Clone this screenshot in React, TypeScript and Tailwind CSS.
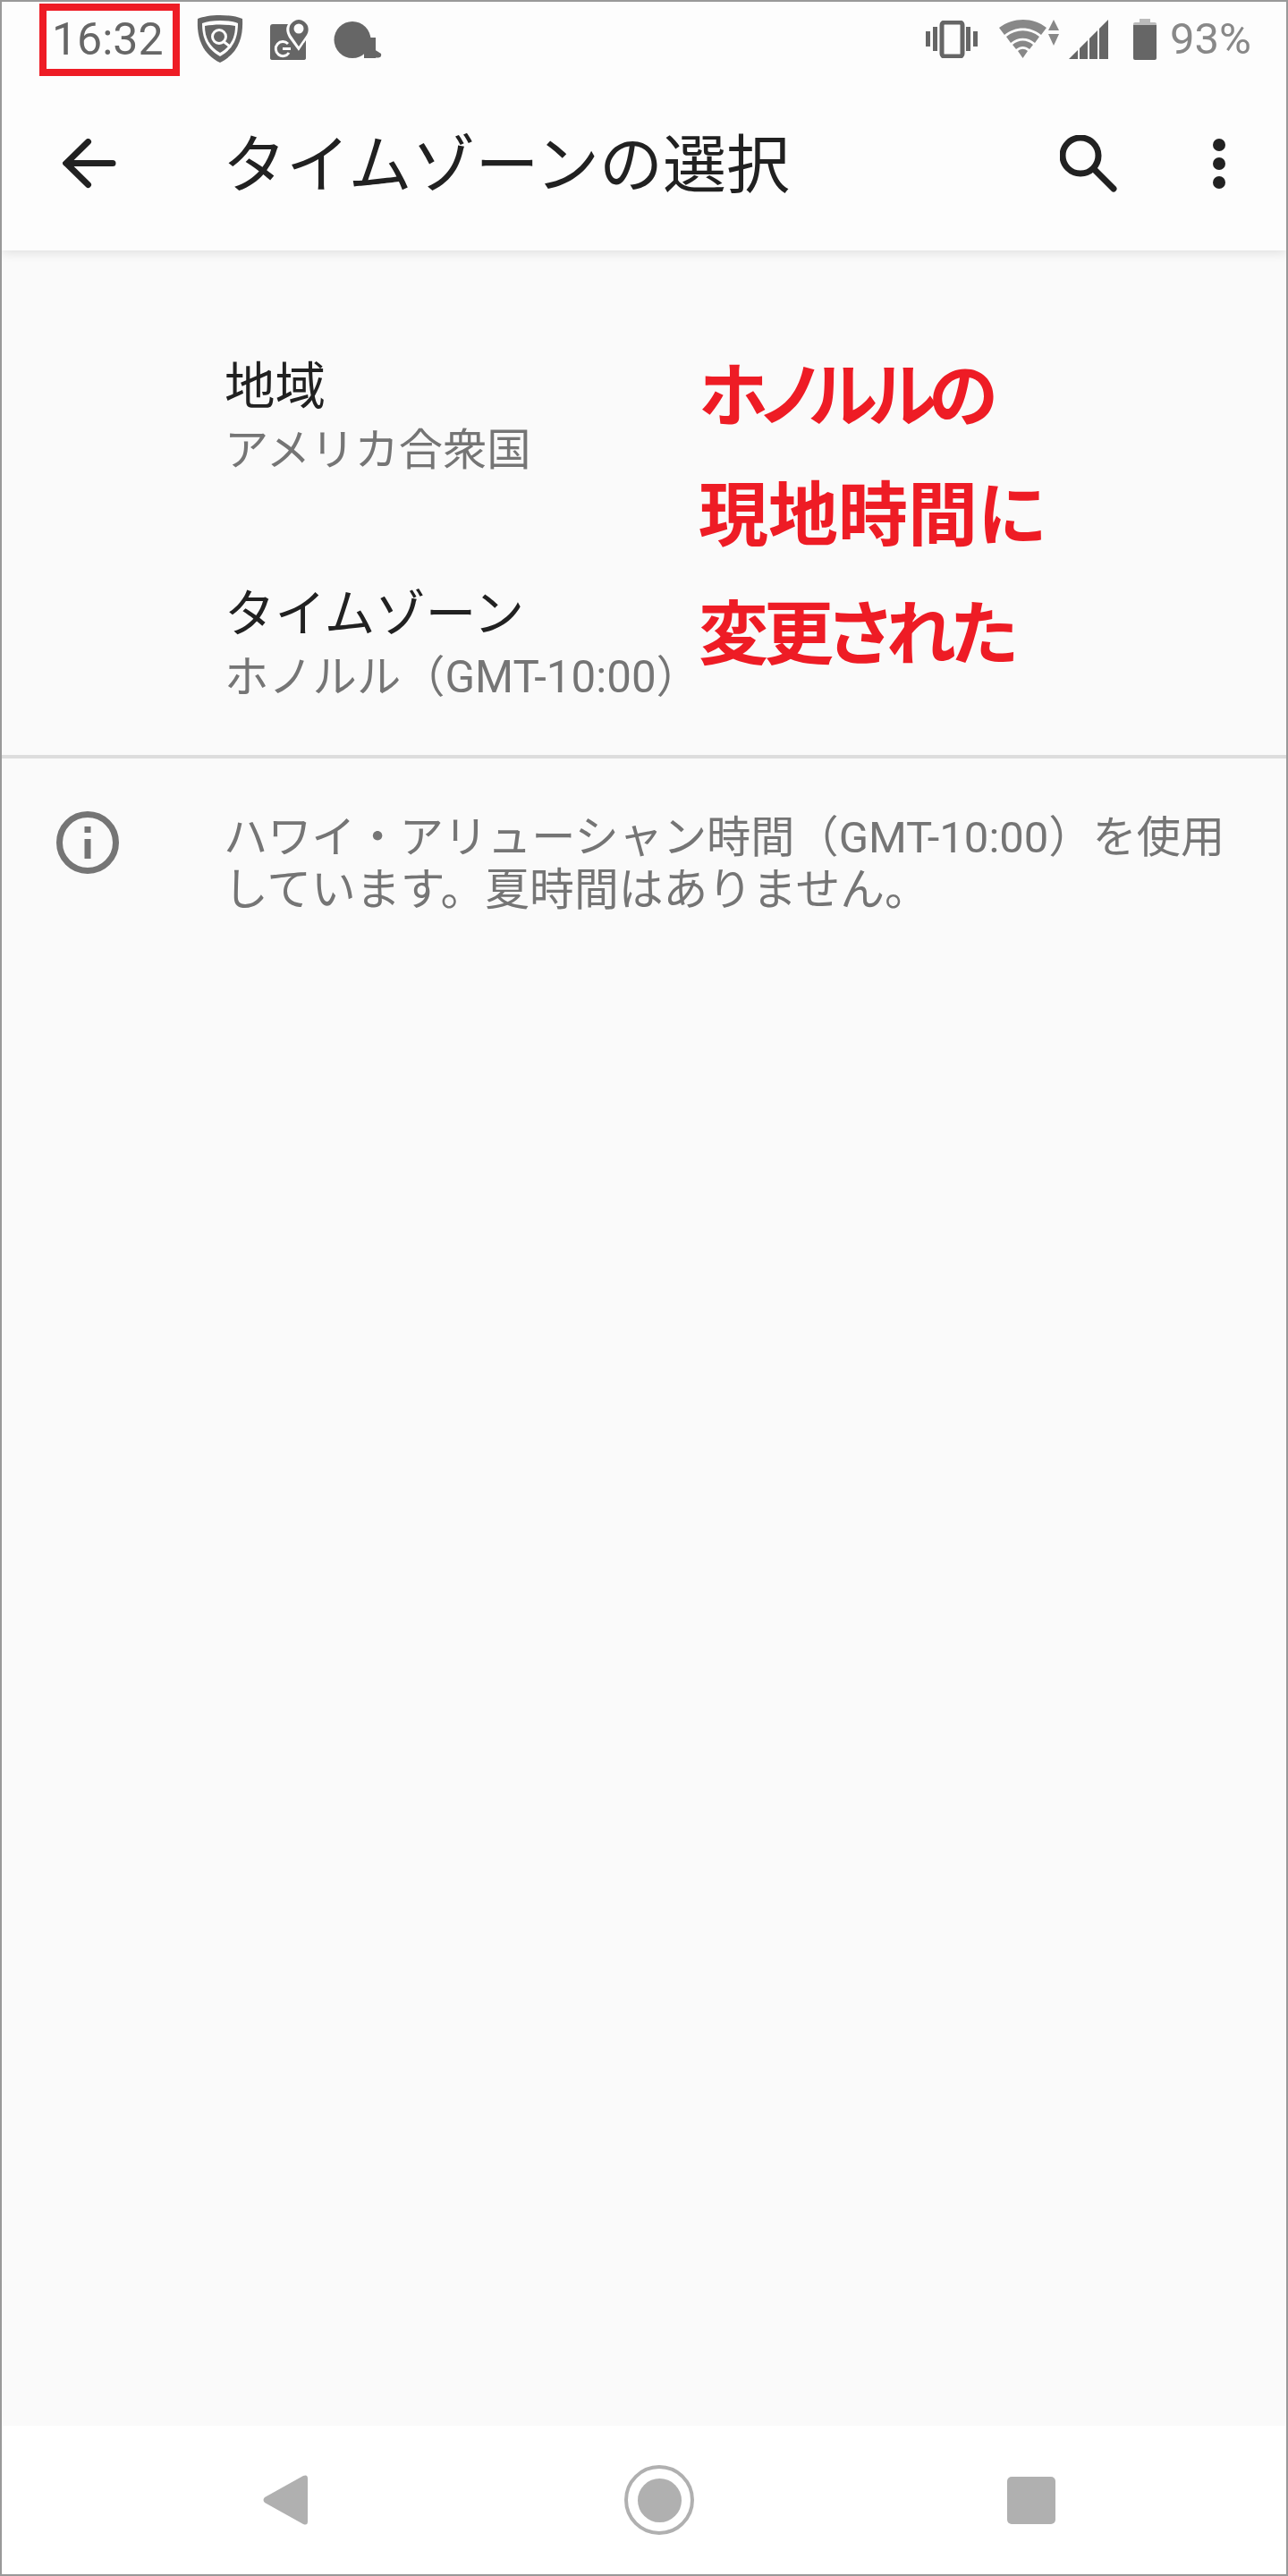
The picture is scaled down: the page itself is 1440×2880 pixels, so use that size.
import React from "react";

function ShieldIcon() {
  return (
    <svg width="52" height="54" viewBox="0 0 52 54" className="block">
      <path d="M26 0C16 0 7 1.500 1 4C0 22 4 42 26 53C48 42 52 22 51 4C45 1.500 36 0 26 0Z" fill="#666" />
      <path d="M26 6C18 6 11 7 6 9C6 24 10 37 26 46C42 37 46 24 46 9C41 7 34 6 26 6Z" fill="#fdfdfd" />
      <path d="M9 12C20 10 32 10 43 12C43 25 38 35 26 42C14 35 9 25 9 12Z" fill="#666" />
      <circle cx="25" cy="24" r="7.500" fill="none" stroke="#fdfdfd" strokeWidth="3" />
      <path d="M30 29.500L37 35" stroke="#fdfdfd" strokeWidth="3" strokeLinecap="round" />
    </svg>
  );
}

function MapsIcon() {
  return (
    <svg width="44" height="47" viewBox="0 0 44 47" className="block">
      <path d="M3 6H26L40 30V44Q40 46 37 46H3Q0 46 0 44V9Q0 6 3 6Z" fill="#666" />
      <path d="M32 36L21 21C18 15 17 11 20 6C23 1 27 0 32 0C37 0 41 1 43 6C45 11 44 15 42 21Z" fill="#fdfdfd" />
      <path d="M40 24V38L32 36Z" fill="#666" />
      <path d="M32 31L23 18C21 15 21 11 22 8C24 4 28 1 32 1C36 1 40 4 42 8C43 11 43 15 41 18Z" fill="#666" />
      <circle cx="32" cy="11" r="5.500" fill="#fdfdfd" />
      <path d="M20 28A8 8 0 1 0 21 38" fill="none" stroke="#fdfdfd" strokeWidth="3" />
      <path d="M14 33.500H23" stroke="#fdfdfd" strokeWidth="3" />
    </svg>
  );
}

function BlobIcon() {
  return (
    <svg width="54" height="41" viewBox="0 0 54 41" className="block">
      <circle cx="21" cy="20.500" r="20.500" fill="#666" />
      <rect x="34" y="18" width="13" height="23" fill="#666" />
      <path d="M42 29L53 36Q54 40 50 40.500H34Z" fill="#666" />
    </svg>
  );
}

function VibrateIcon() {
  return (
    <svg width="58" height="42" viewBox="0 0 58 42" className="block">
      <rect x="18" y="2" width="23" height="38" rx="3" fill="none" stroke="#666" strokeWidth="5" />
      <rect x="0" y="12" width="5" height="17" fill="#666" />
      <rect x="8" y="7" width="5" height="27" fill="#666" />
      <rect x="45" y="7" width="5" height="27" fill="#666" />
      <rect x="53" y="12" width="5" height="17" fill="#666" />
    </svg>
  );
}

function WifiIcon() {
  return (
    <svg width="68" height="44" viewBox="0 0 68 44" className="block">
      <path d="M0 9C16 -3 38 -3 53 9L47 17C35 7 18 7 6 17Z" fill="#888" />
      <path d="M8 19C19 10 34 10 45 19L40 26C32 19 21 19 13 26Z" fill="#888" />
      <path d="M15 28C22 22 31 22 38 28L34 33C29 29 24 29 19 33Z" fill="#888" />
      <path d="M21 35C25 32 28 32 32 35L26.500 43Z" fill="#888" />
      <path d="M61 0L67 12H55Z" fill="#888" />
      <path d="M55 16H67L61 29Z" fill="#888" />
    </svg>
  );
}

function SignalIcon() {
  return (
    <svg width="44" height="44" viewBox="0 0 44 44" className="block">
      <path d="M0 44L10 34V44Z" fill="#666" />
      <path d="M12 32L21 23V44H12Z" fill="#666" />
      <path d="M23 21L32 12V44H23Z" fill="#666" />
      <path d="M34 10L44 0V44H34Z" fill="#666" />
    </svg>
  );
}

function BatteryIcon() {
  return (
    <svg width="26" height="46" viewBox="0 0 26 46" className="block">
      <path d="M7 0H19V4H7Z" fill="#bbb" />
      <path d="M2 4H24Q26 4 26 6V8H0V6Q0 4 2 4Z" fill="#bbb" />
      <path d="M0 7H26V44Q26 46 24 46H2Q0 46 0 44Z" fill="#666" />
    </svg>
  );
}

function BackIcon() {
  return (
    <svg width="60" height="56" viewBox="0 0 60 56" className="block">
      <path d="M28.500 3.500L4 27.500L28.500 51.500M4 27.500H56" fill="none" stroke="#212121" strokeWidth="7" strokeLinecap="round" strokeLinejoin="miter" />
    </svg>
  );
}

function SearchIcon() {
  return (
    <svg width="64" height="64" viewBox="0 0 64 64" className="block">
      <circle cx="23" cy="23" r="20" fill="none" stroke="#212121" strokeWidth="7" />
      <path d="M40 40L60 60" stroke="#212121" strokeWidth="7" strokeLinecap="round" />
    </svg>
  );
}

function MoreIcon() {
  return (
    <svg width="14" height="56" viewBox="0 0 14 56" className="block">
      <circle cx="7" cy="7" r="7" fill="#212121" />
      <circle cx="7" cy="28" r="7" fill="#212121" />
      <circle cx="7" cy="49" r="7" fill="#212121" />
    </svg>
  );
}

function InfoIcon() {
  return (
    <svg width="70" height="70" viewBox="0 0 70 70" className="block shrink-0">
      <circle cx="35" cy="35" r="31.500" fill="none" stroke="#757575" strokeWidth="7" />
      <rect x="31.500" y="31" width="7" height="22" fill="#757575" />
      <rect x="31.500" y="17" width="7" height="7" fill="#757575" />
    </svg>
  );
}

function NavBack() {
  return (
    <svg width="50" height="58" viewBox="0 0 50 58" className="block">
      <path d="M45 2L2 26Q-1 29 2 32L45 56Q50 58 50 53V5Q50 0 45 2Z" fill="#b0b0b0" />
    </svg>
  );
}

function NavHome() {
  return (
    <div className="flex h-[78px] w-[78px] items-center justify-center rounded-full border-4 border-[#b0b0b0]">
      <div className="h-[49px] w-[49px] rounded-full bg-[#b0b0b0]" />
    </div>
  );
}

function Row({ title, value }: { title: string; value: string }) {
  return (
    <div className="flex flex-col">
      <div className="text-[56.5px] leading-[70px] text-[#212121]">{title}</div>
      <div className="text-[49.3px] leading-[70px] text-[#757575] whitespace-nowrap">{value}</div>
    </div>
  );
}

export default function App() {
  return (
    <div className="relative flex h-[2880px] w-[1440px] flex-col overflow-hidden border-2 border-[#999999] bg-[#fafafa] font-['Roboto','Noto_Sans_CJK_JP',sans-serif]">
      <header className="z-10 flex h-[278px] flex-col bg-[#fdfdfd] shadow-[0_2px_12px_rgba(0,0,0,0.12)]">
        <div className="flex h-[84px] items-center justify-between pl-[56px] pr-[39px]">
          <div className="flex items-center">
            <span className="w-[124px] text-[50px] font-normal leading-[60px] text-[#666666]">16:32</span>
            <div className="ml-[38px] flex items-center">
              <ShieldIcon />
              <div className="ml-[30px]"><MapsIcon /></div>
              <div className="ml-[27px]"><BlobIcon /></div>
            </div>
          </div>
          <div className="flex items-center">
            <VibrateIcon />
            <div className="ml-[24px]"><WifiIcon /></div>
            <div className="ml-[10px]"><SignalIcon /></div>
            <div className="ml-[28px]"><BatteryIcon /></div>
            <span className="ml-[15px] text-[49px] leading-[60px] text-[#888888]">93%</span>
          </div>
        </div>
        <div className="flex flex-1 items-center">
          <div className="ml-[68px]"><BackIcon /></div>
          <h1 className="ml-[119px] mt-[3px] text-[71px] font-normal leading-[80px] text-[#212121] whitespace-nowrap">タイムゾーンの選択</h1>
          <div className="ml-auto flex items-center gap-[107px] pr-[68px]">
            <SearchIcon />
            <MoreIcon />
          </div>
        </div>
      </header>

      <main className="flex flex-1 flex-col">
        <section className="relative h-[568px] border-b-4 border-[#dddddd] pl-[249px] pt-[118px]">
          <div className="flex flex-col gap-[114px]">
            <Row title="地域" value="アメリカ合衆国" />
            <Row title="タイムゾーン" value="ホノルル（GMT-10:00）" />
          </div>
          <div className="absolute left-[779px] top-[98px] text-[78px] font-bold leading-[133px] text-[#ee1c25] whitespace-nowrap">
            <div className="tracking-[-9px] [font-feature-settings:'palt']">ホノルルの</div>
            <div>現地時間に</div>
            <div className="tracking-[-5px] [font-feature-settings:'palt']">変更された</div>
          </div>
        </section>
        <section className="flex pl-[61px] pr-[60px] pt-[59px]">
          <InfoIcon />
          <p className="ml-[117px] text-[49.2px] leading-[58px] text-[#757575] whitespace-nowrap">
            <span className="block">ハワイ・アリューシャン時間（<span className="text-[49px]">GMT-10:00</span>）を使用</span>
            <span className="block text-[49.8px]">しています。夏時間はありません。</span>
          </p>
        </section>
      </main>

      <footer className="flex h-[166px] items-center bg-white pl-[292px]">
        <NavBack />
        <div className="ml-[354px]"><NavHome /></div>
        <div className="ml-[350px] h-[53px] w-[54px] rounded-[5px] bg-[#b0b0b0]" />
      </footer>

      <div className="absolute left-[42px] top-[2px] z-20 h-[81px] w-[157px] border-8 border-[#ee1c25]" />
    </div>
  );
}
